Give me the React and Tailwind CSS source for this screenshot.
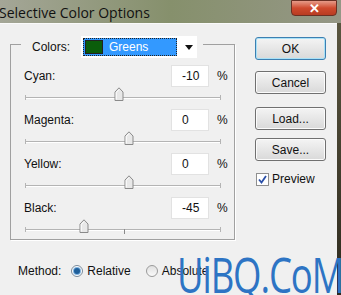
const rows = [
  { label: 'Cyan:', value: '-10', pos: 89 },
  { label: 'Magenta:', value: '0', pos: 99 },
  { label: 'Yellow:', value: '0', pos: 99 },
  { label: 'Black:', value: '-45', pos: 54, tick: true },
];

function Thumb() {
  return (
    <svg width="10" height="14" viewBox="0 0 10 14" className="absolute top-[-8px]">
      <path d="M1 13.5 V5 L5 0.8 L9 5 V13.5 Z" fill="#e8e8e8" stroke="#8a8a8a" strokeWidth="1" />
      <path d="M2.2 12.5 V5.5 L5 2.5" fill="none" stroke="#ffffff" strokeWidth="1" />
    </svg>
  );
}

function Slider({ pos, tick }) {
  return (
    <div className="relative h-[8px] ml-[14px] mr-[13px]">
      <div className="absolute left-0 right-0 top-[2px] h-[1px] bg-[#b4b4b4]" />
      <div className="absolute left-0 right-0 top-[3px] h-[1px] bg-white" />
      <div className="absolute left-0 top-0 w-[1px] h-[5px] bg-[#b4b4b4]" />
      <div className="absolute right-0 top-0 w-[1px] h-[5px] bg-[#b4b4b4]" />
      {tick && <div className="absolute left-[99px] top-[2px] w-[1px] h-[5px] bg-[#8a8a8a]" />}
      <div className="absolute" style={{ left: pos }}>
        <Thumb />
      </div>
    </div>
  );
}

function Row({ label, value, pos, tick }) {
  return (
    <div className="flex flex-col">
      <div className="flex items-center h-[22px]">
        <span className="ml-[13px] w-[147px]">{label}</span>
        <div className="w-[38px] h-[22px] bg-white border border-[#e2e2e2] flex items-center pl-[10px]">
          {value}
        </div>
        <span className="ml-[8px]">%</span>
      </div>
      <div className="mt-[8px] mb-[6px]">
        <Slider pos={pos} tick={tick} />
      </div>
    </div>
  );
}

function Button({ children, primary }) {
  return (
    <div
      className={`w-[71px] h-[23px] rounded-[3px] flex items-center justify-center border bg-gradient-to-b from-[#f4f4f4] to-[#d9d9d9] ${
        primary ? 'border-[#3c7fb1] shadow-[inset_0_0_0_1px_#a9e1f7]' : 'border-[#707070] shadow-[inset_0_0_0_1px_#fbfbfb]'
      }`}
    >
      {children}
    </div>
  );
}

export default function App() {
  return (
    <div
      className="relative w-[341px] h-[295px] overflow-hidden text-[12px] text-[#111]"
      style={{ fontFamily: '"Liberation Sans", Arial, sans-serif' }}
    >
      {/* title bar */}
      <div className="h-[23px] flex items-start bg-gradient-to-r from-[#a4a697] via-[#86906c] to-[#959786] relative">
        <span className="ml-[-1px] mt-[2px] text-[14px] text-[#111]" style={{ fontFamily: '"Open Sans", sans-serif' }}>
          Selective Color Options
        </span>
        <div className="absolute right-[4px] top-0 w-[46px] h-[16px] rounded-b-[4px] bg-gradient-to-b from-[#e59a88] via-[#cf4a2e] to-[#b83c22] border border-[#6a3024] flex items-center justify-center">
          <span className="text-white font-bold text-[13px] leading-none">✕</span>
        </div>
      </div>

      <div className="flex h-[272px]">
        <div className="flex-1 bg-[#f0f0f0] border-t border-[#fafafa] flex">
          {/* left column */}
          <div className="w-[245px] flex flex-col">
            <div className="ml-[10px] mt-[20px] w-[225px] h-[196px] border border-[#a0a0a0] shadow-[1px_1px_0_#ffffff] relative">
              {/* colors row sits over the frame */}
              <div className="absolute left-[10px] top-[-9px] flex items-center bg-[#f0f0f0] pl-[1px] pr-[6px]">
                <span className="ml-[10px] mr-[11px]">Colors:</span>
                <div className="w-[116px] h-[22px] bg-white flex items-center pl-[2px]">
                  <div className="w-[94px] h-[18px] bg-[#3399ff] border border-dotted border-[#222] flex items-center">
                    <div className="w-[18px] h-[14px] bg-[#0b5d0b] border border-[#222] ml-[1px]" />
                    <span className="ml-[6px] text-white">Greens</span>
                  </div>
                  <svg width="8" height="5" viewBox="0 0 8 5" className="ml-[8px]">
                    <path d="M0 0 H8 L4 5 Z" fill="#111" />
                  </svg>
                </div>
              </div>
              <div className="flex flex-col pt-[20px]">
                {rows.map((r) => (
                  <Row key={r.label} {...r} />
                ))}
              </div>
            </div>

            <div className="flex items-center mt-[22px] ml-[18px]">
              <span>Method:</span>
              <div className="ml-[10px] w-[12px] h-[12px] rounded-full border border-[#7a8a9a] bg-white flex items-center justify-center">
                <div className="w-[6px] h-[6px] rounded-full bg-[#1f5f9a] shadow-[0_0_0_1px_#7fb3e0]" />
              </div>
              <span className="ml-[4px]">Relative</span>
              <div className="ml-[15px] w-[12px] h-[12px] rounded-full border border-[#9a9a9a] bg-gradient-to-b from-[#e0e0e0] to-[#fafafa]" />
              <span className="ml-[4px]">Absolute</span>
            </div>
          </div>

          {/* right column */}
          <div className="flex flex-col ml-[10px] mt-[13px]">
            <Button primary>OK</Button>
            <div className="mt-[11px]">
              <Button>Cancel</Button>
            </div>
            <div className="mt-[13px]">
              <Button>Load...</Button>
            </div>
            <div className="mt-[8px]">
              <Button>Save...</Button>
            </div>
            <div className="flex items-center mt-[9px] ml-[1px]">
              <div className="w-[13px] h-[13px] border border-[#8f8f8f] bg-white flex items-center justify-center">
                <svg width="9" height="9" viewBox="0 0 9 9">
                  <path d="M1 4.5 L3.5 7.5 L8 1" fill="none" stroke="#2a4fa8" strokeWidth="1.8" />
                </svg>
              </div>
              <span className="ml-[3px]">Preview</span>
            </div>
          </div>
        </div>
        <div className="w-[4px] bg-gradient-to-b from-[#5a5640] to-[#2e2a1e]" />
      </div>

      {/* watermark */}
      <div
        className="absolute left-[177px] top-[249px] text-[50px] leading-none text-[#2d74c4] tracking-[-1.5px] origin-left scale-x-[0.73]"
        style={{ fontFamily: '"Open Sans", sans-serif' }}
      >
        UiBQ.CoM
      </div>
    </div>
  );
}
